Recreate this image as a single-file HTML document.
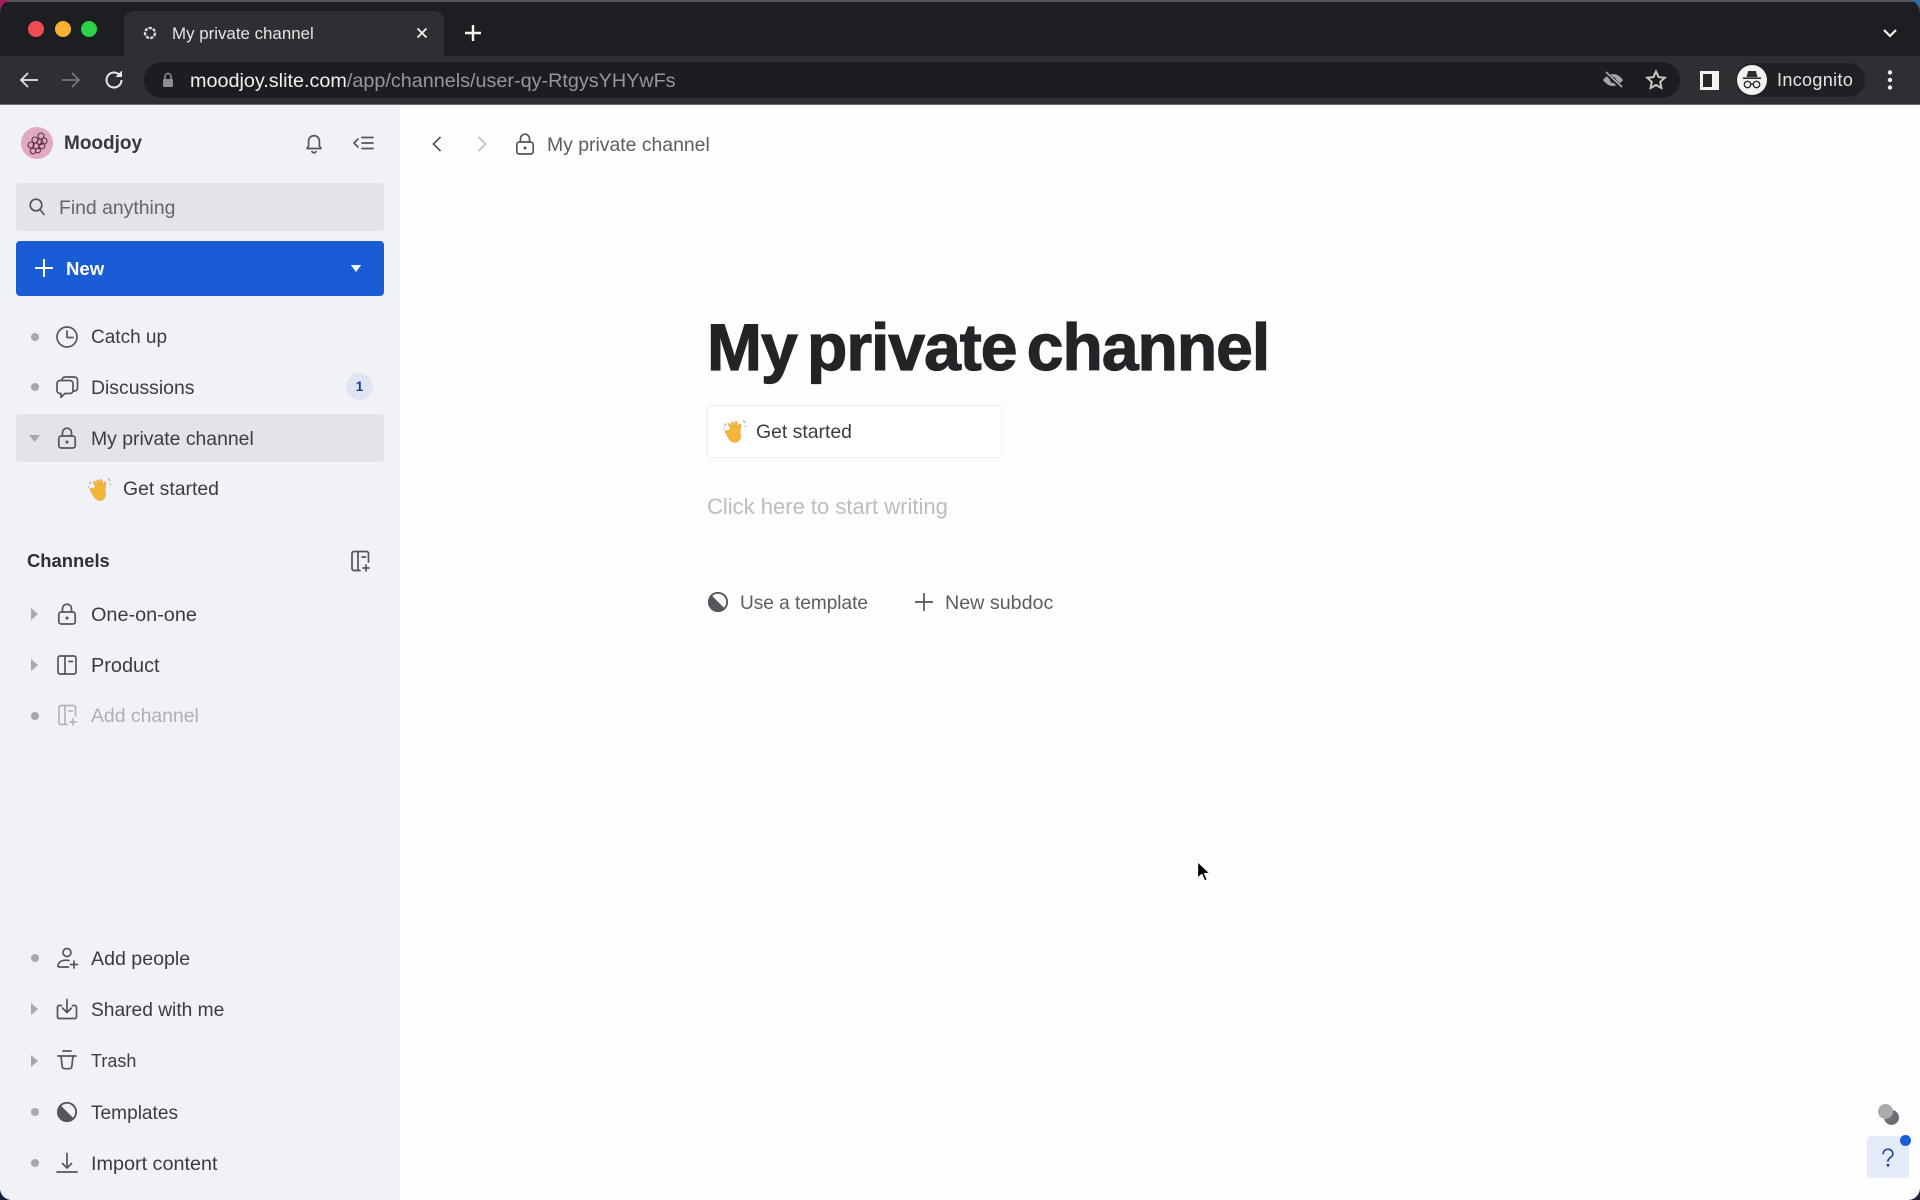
<!DOCTYPE html>
<html lang="en"><head><meta charset="utf-8"><title>My private channel</title>
<style>
html,body{margin:0;padding:0;width:1920px;height:1200px;overflow:hidden;background:#15233f}
body{position:relative;font-family:"Liberation Sans",sans-serif}
.abs,.t,svg{position:absolute;display:block}
.t{line-height:24px;height:24px;white-space:nowrap;font-size:19.4px;color:#3a3c41;margin-top:1px}
#win{position:absolute;left:0;top:0;width:1920px;height:1200px;border-radius:12px;overflow:hidden;background:#fdfdfd}
.i{width:24px;height:24px;fill:none;stroke:#54565c;stroke-width:1.7;stroke-linecap:round;stroke-linejoin:round}
.dot{position:absolute;left:30.5px;width:8px;height:8px;border-radius:50%;background:#a6a8ac}
</style></head><body>
<div class="abs" style="left:0;top:0;width:30px;height:30px;background:#a8185a"></div>
<div class="abs" style="right:0;top:0;width:30px;height:30px;background:#2f6aa8"></div>
<div class="abs" style="right:0;bottom:0;width:30px;height:30px;background:#1c2433"></div>
<div id="win">
<!-- browser chrome -->
<div class="abs" style="left:0;top:0;width:1920px;height:56px;background:#1d1e21;border-top:2px solid #54555a;box-sizing:border-box"></div>
<div class="abs" style="left:0;top:56px;width:1920px;height:49px;background:#2e2f33"></div>
<div class="abs" style="left:0;top:104px;width:1920px;height:1px;background:#6a6b70"></div>
<div class="abs" style="left:28px;top:21px;width:16px;height:16px;border-radius:50%;background:#ee4c52"></div>
<div class="abs" style="left:55px;top:21px;width:16px;height:16px;border-radius:50%;background:#f5b130"></div>
<div class="abs" style="left:81px;top:21px;width:16px;height:16px;border-radius:50%;background:#2ed14a"></div>
<div class="abs" style="left:124px;top:11px;width:320px;height:45px;background:#2e2f33;border-radius:10px 10px 0 0"></div>
<svg style="left:142px;top:25px" width="16" height="16" viewBox="0 0 16 16" fill="none" stroke="#d8d8da" stroke-width="2.4" stroke-dasharray="3.2 1.2"><circle cx="8" cy="8" r="5"/></svg>
<div class="t" style="left:172px;top:21px;font-size:16.9px;color:#e4e5e7">My private channel</div>
<svg style="left:413px;top:24px" width="18" height="18" viewBox="0 0 18 18" stroke="#f2f2f2" stroke-width="1.8" fill="none"><path d="M4.500 4.500l9 9M13.500 4.500l-9 9"/></svg>
<svg style="left:462px;top:22px" width="22" height="22" viewBox="0 0 22 22" stroke="#f5f5f5" stroke-width="2.4" fill="none"><path d="M11 3v16M3 11h16"/></svg>
<svg style="left:1880px;top:25px" width="20" height="16" viewBox="0 0 20 16" stroke="#f2f2f2" stroke-width="2.2" fill="none"><path d="M4 5l6 6 6-6"/></svg>
<svg style="left:17px;top:68px" width="24" height="24" viewBox="0 0 24 24" stroke="#e8e8ea" stroke-width="1.700" fill="none"><path d="M21 12H4M11 5l-7 7 7 7"/></svg>
<svg style="left:59px;top:68px" width="24" height="24" viewBox="0 0 24 24" stroke="#77787c" stroke-width="1.700" fill="none"><path d="M3 12h17M13 5l7 7-7 7"/></svg>
<svg style="left:102px;top:68px" width="24" height="24" viewBox="0 0 24 24" stroke="#e8e8ea" stroke-width="2" fill="none"><path d="M19.500 12a7.500 7.500 0 1 1-2.400-5.500"/><path d="M19.500 3v5.500H14" fill="#e8e8ea" stroke-width="1"/></svg>
<div class="abs" style="left:144px;top:62px;width:1536px;height:36px;background:#1c1d20;border-radius:18px"></div>
<svg style="left:161px;top:72px" width="14" height="16" viewBox="0 0 14 16"><rect x="2" y="7" width="10" height="8" rx="1" fill="#8e8f93"/><path d="M4 7V4.500a3 3 0 0 1 6 0V7" fill="none" stroke="#8e8f93" stroke-width="1.600"/></svg>
<div class="t" style="left:190px;top:68px;font-size:19.800px;color:#f0f0f2">moodjoy.slite.com<span style="color:#96979b">/app/channels/user-qy-RtgysYHYwFs</span></div>
<svg style="left:1601px;top:68px" width="24" height="24" viewBox="0 0 24 24"><path d="M2 12s4-6 10-6 10 6 10 6-4 6-10 6-10-6-10-6z" fill="#a5a6a9"/><circle cx="12" cy="12" r="3" fill="#1c1d20"/><path d="M4 4l17 16" stroke="#1c1d20" stroke-width="4"/><path d="M5 4l16 15" stroke="#a5a6a9" stroke-width="1.800"/></svg>
<svg style="left:1644px;top:68px" width="24" height="24" viewBox="0 0 24 24" fill="none" stroke="#c6c7c9" stroke-width="2"><path d="M12 3.500l2.600 5.600 6.100.7-4.500 4.200 1.200 6-5.400-3-5.400 3 1.200-6-4.500-4.200 6.100-.7z"/></svg>
<div class="abs" style="left:1700px;top:71px;width:19px;height:19px;background:#f2f2f2"></div>
<div class="abs" style="left:1703px;top:74px;width:9px;height:13px;background:#26272a"></div>
<div class="abs" style="left:1736px;top:63px;width:129px;height:34px;background:#1f2023;border-radius:17px"></div>
<svg style="left:1737px;top:65px" width="30" height="30" viewBox="0 0 30 30"><circle cx="15" cy="15" r="15" fill="#f2f2f2"/><path d="M9.500 12l1.600-6h7.800l1.600 6z" fill="#2b2c2f"/><path d="M6 13.200h18" stroke="#2b2c2f" stroke-width="1.600"/><g fill="none" stroke="#2b2c2f" stroke-width="1.400"><circle cx="10.500" cy="19.500" r="3.200"/><circle cx="19.500" cy="19.500" r="3.200"/><path d="M13.700 19h2.600"/></g></svg>
<div class="t" style="left:1777px;top:67px;font-size:18px;color:#e6e6e8;letter-spacing:.35px">Incognito</div>
<svg style="left:1886px;top:69px" width="8" height="22" viewBox="0 0 8 22" fill="#ececee"><circle cx="4" cy="3.500" r="2.200"/><circle cx="4" cy="11" r="2.200"/><circle cx="4" cy="18.500" r="2.200"/></svg>

<!-- sidebar -->
<div class="abs" style="left:0;top:105px;width:400px;height:1095px;background:#f0f2f6"></div>
<svg style="left:21px;top:127px" width="32" height="32" viewBox="0 0 32 32"><circle cx="16" cy="16" r="16" fill="#e2a9c2"/><g fill="none" stroke="#5a3048" stroke-width="1.100"><circle cx="20" cy="9" r="3"/><circle cx="23" cy="14" r="3"/><circle cx="19" cy="15" r="3"/><circle cx="14" cy="13" r="3"/><circle cx="21" cy="19" r="2.800"/><circle cx="15" cy="19" r="3"/><circle cx="10" cy="18" r="3"/><circle cx="12" cy="24" r="2.800"/><circle cx="17" cy="23.500" r="2.400"/></g></svg>
<div class="t" style="left:64px;top:131px;font-weight:700;font-size:19px;color:#36383c">Moodjoy</div>
<svg class="i" style="left:302px;top:131px" viewBox="0 0 24 24"><path d="M5 17.500h14l-1.600-2.500V10a5.400 5.400 0 0 0-10.800 0v5z"/><path d="M10 20.500a2.200 2.200 0 0 0 4 0"/></svg>
<svg class="i" style="left:351px;top:131px" viewBox="0 0 24 24"><path d="M7 8l-4 4 4 4M11 6.500h11M11 12h11M11 17.500h11"/></svg>

<div class="abs" style="left:16px;top:183px;width:368px;height:48px;background:#e2e4e9;border-radius:4px"></div>
<svg class="i" style="left:25px;top:195px" viewBox="0 0 24 24"><circle cx="11" cy="10" r="5.800"/><path d="M15 14.500l4 5"/></svg>
<div class="t" style="left:59px;top:194.500px;color:#64666c">Find anything</div>

<div class="abs" style="left:16px;top:241px;width:368px;height:55px;background:#1a5bd6;border-radius:4px"></div>
<svg style="left:32px;top:256px" width="24" height="24" viewBox="0 0 24 24" stroke="#fff" stroke-width="2" fill="none"><path d="M12 3v18M3 12h18"/></svg>
<div class="t" style="left:66px;top:256px;color:#fff;font-weight:700;font-size:18.600px">New</div>
<svg style="left:350px;top:264px" width="12" height="9" viewBox="0 0 12 9"><path d="M.8 1h10.400L6 8z" fill="#f2f5fc"/></svg>

<!-- top rows -->
<div class="dot" style="top:333px"></div>
<svg class="i" style="left:54.500px;top:325px" viewBox="0 0 24 24"><circle cx="12" cy="12" r="10"/><path d="M12 6v6.500h6"/></svg>
<div class="t" style="left:91px;top:325px;font-size:19px">Catch up</div>

<div class="dot" style="top:383px"></div>
<svg class="i" style="left:54.500px;top:375px" viewBox="0 0 24 24"><path d="M7 5.500V5a3 3 0 0 1 3-3h9.500a3 3 0 0 1 3 3v8a3 3 0 0 1-3 3H18"/><path d="M5 5.500h10a3 3 0 0 1 3 3v7a3 3 0 0 1-3 3H10l-4 3.800v-3.800H5a3 3 0 0 1-3-3v-7a3 3 0 0 1 3-3z"/></svg>
<div class="t" style="left:91px;top:375px">Discussions</div>
<div class="abs" style="left:346px;top:373px;width:27px;height:27px;border-radius:50%;background:#dfe5f3;color:#1f3c88;font:700 13.500px/27px 'Liberation Sans',sans-serif;text-align:center">1</div>

<div class="abs" style="left:16px;top:414px;width:368px;height:48px;background:#e2e4e9;border-radius:4px"></div>
<svg style="left:28px;top:434px" width="13" height="9" viewBox="0 0 13 9"><path d="M1 1h11L6.500 8z" fill="#a6a8ac"/></svg>
<svg class="i" style="left:54.500px;top:426px" viewBox="0 0 24 24"><rect x="3.800" y="10" width="16.400" height="12" rx="2.500"/><path d="M7.500 10V6.700a4.500 4.500 0 0 1 9 0V10"/><circle cx="12" cy="16" r=".7" fill="#54565c"/></svg>
<div class="t" style="left:91px;top:426px">My private channel</div>

<svg style="left:87px;top:476px" width="26" height="26" viewBox="0 0 24 24"><path d="M8 10l-2-3.500c-.8-1.300 1-2.300 1.800-1L10 9 8.800 5c-.5-1.500 1.500-2.100 2-.6l1.500 4.400-.4-4.600c-.1-1.500 2-1.600 2.100-.1l.7 5 .8-2.900c.4-1.400 2.300-.9 2 .5l-.7 5c-.3 2 .6 3.500.4 5.600-.3 3.500-3 5.700-6.300 5.200-2.500-.4-3.800-1.900-5-4L3 13c-.8-1.300 1-2.400 1.900-1.100z" fill="#f4b63a" stroke="#dc9a22" stroke-width=".4"/><path d="M2 7.500l2-2.500M1 10.500l1-.6M19.500 2.500l2 2M21 8l1.500-.5" stroke="#b4b6bc" stroke-width="1.400" fill="none"/></svg>
<div class="t" style="left:123px;top:476px">Get started</div>

<div class="t" style="left:27px;top:548px;font-weight:700;font-size:18.400px;color:#2e3034">Channels</div>
<svg class="i" style="left:348px;top:549px" viewBox="0 0 24 24"><path d="M12 21.500H6a2 2 0 0 1-2-2v-15a2 2 0 0 1 2-2h12.500a2 2 0 0 1 2 2V13M10 2.500v19M14 8h3.500M18 16v6M15 19h6"/></svg>

<svg style="left:30px;top:607px" width="9" height="14" viewBox="0 0 9 14"><path d="M1 1v12l7-6z" fill="#a6a8ac"/></svg>
<svg class="i" style="left:54.500px;top:602px" viewBox="0 0 24 24"><rect x="3.800" y="10" width="16.400" height="12" rx="2.500"/><path d="M7.500 10V6.700a4.500 4.500 0 0 1 9 0V10"/><circle cx="12" cy="16" r=".7" fill="#54565c"/></svg>
<div class="t" style="left:91px;top:602px;font-size:19.850px">One-on-one</div>

<svg style="left:30px;top:658px" width="9" height="14" viewBox="0 0 9 14"><path d="M1 1v12l7-6z" fill="#a6a8ac"/></svg>
<svg class="i" style="left:54.500px;top:653px" viewBox="0 0 24 24"><rect x="3" y="3" width="18" height="18" rx="2"/><path d="M10 3v18M14 8.500h3.500"/></svg>
<div class="t" style="left:91px;top:653px;font-size:19.900px">Product</div>

<div class="dot" style="top:712px"></div>
<svg class="i" style="left:54.500px;top:703px;stroke:#b4b6ba" viewBox="0 0 24 24"><path d="M12 21.500H6a2 2 0 0 1-2-2v-15a2 2 0 0 1 2-2h12.500a2 2 0 0 1 2 2V13M10 2.500v19M14 8h3.500M18 16v6M15 19h6"/></svg>
<div class="t" style="left:91px;top:703px;color:#aeb0b4">Add channel</div>

<!-- bottom rows -->
<div class="dot" style="top:954px"></div>
<svg class="i" style="left:54.500px;top:946px" viewBox="0 0 24 24"><circle cx="12" cy="6.500" r="4"/><path d="M14 14.500c-1-.2-2-.3-3-.3-4.500 0-7.500 2-8 5.300-.1.800.3 1.500 1 1.500h9.500M19 15v7M15.500 18.500h7"/></svg>
<div class="t" style="left:91px;top:946px;font-size:19.600px">Add people</div>

<svg style="left:30px;top:1002px" width="9" height="14" viewBox="0 0 9 14"><path d="M1 1v12l7-6z" fill="#a6a8ac"/></svg>
<svg class="i" style="left:54.500px;top:997px" viewBox="0 0 24 24"><path d="M6.500 8.500H4a1.500 1.500 0 0 0-1.500 1.500v10A1.500 1.500 0 0 0 4 21.500h16a1.500 1.500 0 0 0 1.500-1.500V10A1.500 1.500 0 0 0 20 8.500h-2.500M12 2.500v13M7.500 11l4.500 4.500 4.500-4.500"/></svg>
<div class="t" style="left:91px;top:998px;font-size:19.200px">Shared with me</div>

<svg style="left:30px;top:1054px" width="9" height="14" viewBox="0 0 9 14"><path d="M1 1v12l7-6z" fill="#a6a8ac"/></svg>
<svg class="i" style="left:54.500px;top:1049px" viewBox="0 0 24 24"><path d="M8 2h8M3 7h18M6 7l1.200 10.500a2.500 2.500 0 0 0 2.500 2.200h4.600a2.500 2.500 0 0 0 2.500-2.200L18 7"/></svg>
<div class="t" style="left:91px;top:1048px;font-size:18px">Trash</div>

<div class="dot" style="top:1108px"></div>
<svg style="left:56.500px;top:1102px" width="20" height="20" viewBox="0 0 20 20"><circle cx="10" cy="10" r="10" fill="#54565c"/><path d="M3.500 3.200a9 9 0 0 1 13.500 13.500z" fill="#f0f2f6"/><circle cx="10" cy="10" r="9.100" fill="none" stroke="#54565c" stroke-width="1.800"/></svg>
<div class="t" style="left:91px;top:1100.500px;font-size:19.100px">Templates</div>

<div class="dot" style="top:1159px"></div>
<svg class="i" style="left:54.500px;top:1151px" viewBox="0 0 24 24"><path d="M12 2.500v14.500M7.500 12.500l4.500 4.500 4.500-4.500M2 21h20"/></svg>
<div class="t" style="left:91px;top:1150.500px;font-size:19.800px">Import content</div>

<!-- main top -->
<svg style="left:425px;top:131px" width="24" height="26" viewBox="0 0 24 26" fill="none" stroke="#54565c" stroke-width="1.700"><path d="M15.500 6l-7 7 7 7"/></svg>
<svg style="left:470px;top:131px" width="24" height="26" viewBox="0 0 24 26" fill="none" stroke="#c2c3c6" stroke-width="1.700"><path d="M8.500 6l7 7-7 7"/></svg>
<svg class="i" style="left:513px;top:132px" viewBox="0 0 24 24"><rect x="3.800" y="10" width="16.400" height="12" rx="2.500"/><path d="M7.500 10V6.700a4.500 4.500 0 0 1 9 0V10"/><circle cx="12" cy="16" r=".7" fill="#54565c"/></svg>
<div class="t" style="left:547px;top:132px;color:#5b5d63">My private channel</div>

<!-- main content -->
<div class="t" style="left:707px;top:310px;height:74px;line-height:74px;margin:0;font-size:66px;font-weight:700;color:#232427;letter-spacing:-1px;word-spacing:-7px;-webkit-text-stroke:1.200px #232427">My private channel</div>
<div class="abs" style="left:707px;top:405px;width:295px;height:53px;box-sizing:border-box;background:#fff;border:1px solid #eeeff1;border-radius:3px"></div>
<svg style="left:722px;top:418px" width="26" height="26" viewBox="0 0 24 24"><path d="M8 10l-2-3.500c-.8-1.300 1-2.300 1.800-1L10 9 8.800 5c-.5-1.500 1.500-2.100 2-.6l1.500 4.400-.4-4.600c-.1-1.500 2-1.600 2.100-.1l.7 5 .8-2.900c.4-1.400 2.300-.9 2 .5l-.7 5c-.3 2 .6 3.500.4 5.600-.3 3.500-3 5.700-6.300 5.200-2.500-.4-3.800-1.900-5-4L3 13c-.8-1.300 1-2.400 1.900-1.100z" fill="#f4b63a" stroke="#dc9a22" stroke-width=".4"/><path d="M2 7.500l2-2.500M1 10.500l1-.6M19.500 2.500l2 2M21 8l1.500-.5" stroke="#b4b6bc" stroke-width="1.400" fill="none"/></svg>
<div class="t" style="left:756px;top:419px">Get started</div>
<div class="t" style="left:707px;top:494px;font-size:22px;color:#bcbdc0">Click here to start writing</div>

<svg style="left:708px;top:592px" width="20" height="20" viewBox="0 0 20 20"><circle cx="10" cy="10" r="10" fill="#54565c"/><path d="M3.500 3.200a9 9 0 0 1 13.500 13.500z" fill="#fdfdfd"/><circle cx="10" cy="10" r="9.100" fill="none" stroke="#54565c" stroke-width="1.800"/></svg>
<div class="t" style="left:740px;top:591px;color:#5b5d63;font-size:19.050px">Use a template</div>
<svg style="left:912px;top:590px" width="24" height="24" viewBox="0 0 24 24" fill="none" stroke="#54565c" stroke-width="1.700"><path d="M12 3v18M3 12h18"/></svg>
<div class="t" style="left:945px;top:590px;color:#5b5d63;font-size:19.700px">New subdoc</div>

<!-- help -->
<div class="abs" style="left:1884px;top:1110px;width:15px;height:15px;border-radius:50%;background:#6d6e73"></div>
<div class="abs" style="left:1878px;top:1104px;width:15px;height:15px;border-radius:50%;background:#a9aaae"></div>
<div class="abs" style="left:1867px;top:1136px;width:42px;height:42px;background:#e3eaf8;border-radius:4px"></div>
<svg style="left:1880px;top:1147px" width="16" height="22" viewBox="0 0 20 24" fill="none" stroke="#24458f" stroke-width="2" stroke-linecap="round"><path d="M4 6.500a6 5.500 0 1 1 9.500 4.500c-2 1.500-3.500 2.500-3.500 5"/><circle cx="10" cy="21" r=".8" fill="#24458f"/></svg>
<div class="abs" style="left:1900px;top:1135px;width:11px;height:11px;border-radius:50%;background:#1a5bd6"></div>

<!-- cursor -->
<svg style="left:1193px;top:857px" width="22" height="28" viewBox="0 0 22 28"><path d="M4.500 4.500v17l4.300-4 2.800 6.500 2.800-1.200-2.800-6.300h5.700z" fill="#000" stroke="#fff" stroke-width="1.300" stroke-linejoin="round"/></svg>
</div>
</body></html>
